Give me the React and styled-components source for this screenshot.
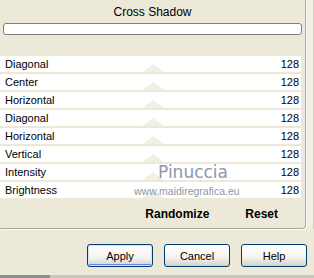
import React from 'react'
import styled, { createGlobalStyle } from 'styled-components'

const GlobalStyle = createGlobalStyle`
  html, body { margin: 0; padding: 0; background: #ECE9D8; }
  body { font-family: "Liberation Sans", Arial, sans-serif; }
`

const Dialog = styled.div`
  position: relative;
  width: 314px;
  height: 278px;
  background: #ECE9D8;
  overflow: hidden;
  display: flex;
  flex-direction: column;
`

const Top = styled.div`
  display: flex;
`

const Panel = styled.div`
  width: 305px;
  height: 228px;
  border-right: 1px solid #aca899;
  border-bottom: 1px solid #aca899;
  border-bottom-right-radius: 4px;
  box-shadow: 1px 1px 0 #fff;
  display: flex;
  flex-direction: column;
`

const Side = styled.div`
  flex: 1;
  margin-left: 2px;
  background: #f1efe4;
  border-right: 1px solid #d2cfc0;
`

const Title = styled.div`
  height: 23px;
  line-height: 24px;
  text-align: center;
  font-size: 12px;
  color: #000;
`

const Progress = styled.div`
  margin: 0 3px 0 3px;
  height: 10px;
  background: #fff;
  border: 1px solid #7f7f7f;
  border-radius: 3px;
`

const List = styled.div`
  margin-top: 21px;
  width: 301px;
  display: flex;
  flex-direction: column;
`

const Row = styled.div`
  position: relative;
  height: 16px;
  margin-bottom: 2px;
  background: #fff;
  display: flex;
  align-items: center;
  justify-content: space-between;
  padding: 0 2px 0 5px;
  font-size: 11px;
  color: #000;
`

const Thumb = styled.span`
  position: absolute;
  left: 142px;
  bottom: 0;
  width: 0;
  height: 0;
  border-left: 11px solid transparent;
  border-right: 11px solid transparent;
  border-bottom: 8px solid #f2efe5;
`

const Label = styled.span`
  position: relative;
`

const Value = styled.span`
  position: relative;
`

const Footer = styled.div`
  flex: 1;
  display: flex;
  align-items: center;
  justify-content: flex-end;
  gap: 36px;
  padding: 0 27px 0 0;
  font-size: 12px;
  font-weight: bold;
`

const Buttons = styled.div`
  display: flex;
  justify-content: flex-end;
  gap: 11px;
  padding: 15px 7px 0 0;
`

const Button = styled.button`
  width: 66px;
  height: 23px;
  padding: 0;
  font-family: "Liberation Sans", Arial, sans-serif;
  font-size: 11px;
  color: #000;
  border: 1px solid #003c74;
  border-radius: 3px;
  background: linear-gradient(#ffffff, #f4f3ee 60%, #d6d0c5);
  box-shadow: ${p => p.$focus
    ? 'inset 0 0 0 1px #cee7ff, inset 0 -1px 0 1px #6982ee'
    : 'inset 0 -1px 0 #d6d0c5'};
`

const BottomStrip = styled.div`
  margin-top: auto;
  height: 3px;
  background: linear-gradient(90deg, #8f8f8f 0, #8f8f8f 50px, #c9c6ba 50px);
`

const Watermark = styled.div`
  position: absolute;
  left: ${p => p.$x}px;
  top: ${p => p.$y}px;
  font-family: ${p => p.$big ? '"DejaVu Sans"' : '"Liberation Sans"'}, sans-serif;
  font-size: ${p => p.$size}px;
  color: ${p => p.$big ? '#8d97b0' : '#8f96a2'};
  text-shadow: 0 0 1px #fff;
  white-space: nowrap;
  pointer-events: none;
`

const rows = ['Diagonal', 'Center', 'Horizontal', 'Diagonal', 'Horizontal', 'Vertical', 'Intensity', 'Brightness']

export default function App() {
  return (
    <Dialog>
      <GlobalStyle />
      <Top>
        <Panel>
          <Title>Cross Shadow</Title>
          <Progress />
          <List>
            {rows.map((r, i) => (
              <Row key={i}>
                <Thumb />
                <Label>{r}</Label>
                <Value>128</Value>
              </Row>
            ))}
          </List>
          <Footer>
            <span>Randomize</span>
            <span>Reset</span>
          </Footer>
        </Panel>
        <Side />
      </Top>
      <Buttons>
        <Button $focus>Apply</Button>
        <Button>Cancel</Button>
        <Button>Help</Button>
      </Buttons>
      <BottomStrip />
      <Watermark $big $x={158} $y={162} $size={17}>Pinuccia</Watermark>
      <Watermark $x={134} $y={185} $size={10.5}>www.maidiregrafica.eu</Watermark>
    </Dialog>
  )
}
